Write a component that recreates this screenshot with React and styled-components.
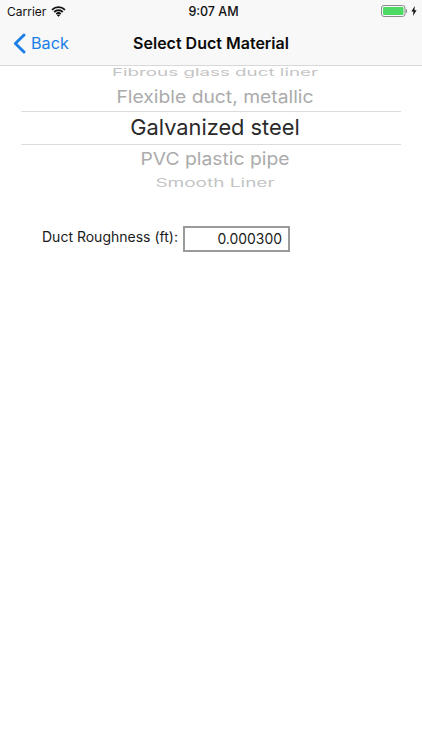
import React from "react";
import styled, { createGlobalStyle } from "styled-components";

const GlobalStyle = createGlobalStyle`
  html, body {
    margin: 0;
    padding: 0;
    background: #fff;
    font-family: "Inter", "Liberation Sans", sans-serif;
  }
`;

const Page = styled.div`
  width: 422px;
  height: 750px;
  overflow: hidden;
  background: #fff;
`;

const Header = styled.header`
  background: #f8f8f8;
  border-bottom: 1px solid #d8d8d8;
  height: 66px;
  box-sizing: border-box;
`;

const StatusBar = styled.div`
  height: 22px;
  padding: 0 5px 0 7px;
  display: grid;
  grid-template-columns: 1fr auto 1fr;
  align-items: center;
  font-size: 12px;
  color: #111;
`;

const StatusLeft = styled.div`
  display: flex;
  align-items: center;
  gap: 5px;
`;

const Clock = styled.div`
  font-weight: 500;
  font-size: 12.5px;
  padding-left: 3px;
`;

const StatusRight = styled.div`
  display: flex;
  justify-content: flex-end;
  align-items: center;
  gap: 4px;
`;

const NavBar = styled.nav`
  height: 42px;
  display: grid;
  grid-template-columns: 1fr auto 1fr;
  align-items: center;
`;

const BackLink = styled.a`
  display: flex;
  align-items: center;
  gap: 5px;
  padding-left: 13px;
  color: #1a7ee6;
  font-size: 16.2px;
`;

const NavTitle = styled.h1`
  margin: 0;
  font-size: 16px;
  font-weight: 600;
  color: #0a0a0a;
`;

const Picker = styled.div`
  margin: 0 21px;
  display: flex;
  flex-direction: column;
  align-items: center;
`;

const PickerRow = styled.div`
  width: 100%;
  height: ${(p) => p.$height}px;
  padding: ${(p) => p.$top || 0}px 0 ${(p) => p.$bottom || 0}px 8px;
  display: flex;
  justify-content: center;
  align-items: center;
  overflow: hidden;
  white-space: nowrap;
  box-sizing: border-box;
  font-size: ${(p) => p.$size}px;
  color: ${(p) => p.$color};
`;

const SelectedRow = styled(PickerRow)`
  border-top: 1px solid #dcdcdc;
  border-bottom: 1px solid #dcdcdc;
`;

const Squashed = styled.span`
  display: inline-block;
  transform: scaleY(${(p) => p.$scale});
`;

const RoughnessRow = styled.div`
  display: flex;
  align-items: flex-start;
  gap: 5px;
  margin-top: 32px;
  padding-left: 42px;
`;

const RoughnessLabel = styled.label`
  font-size: 14px;
  line-height: 22px;
  color: #1a1a1a;
`;

const RoughnessValue = styled.div`
  width: 107px;
  height: 26px;
  box-sizing: border-box;
  border: 2px solid #9a9a9a;
  padding-right: 6px;
  display: flex;
  align-items: center;
  justify-content: flex-end;
  font-size: 13.9px;
  color: #1a1a1a;
`;

const WifiIcon = () => (
  <svg width="15" height="11" viewBox="0 0 15 11" fill="none" stroke="#111" strokeWidth="1.8">
    <path d="M1 3.8a9.4 9.4 0 0 1 13 0" />
    <path d="M3.2 6a6.2 6.2 0 0 1 8.6 0" />
    <path d="M5.3 8.1a3.2 3.2 0 0 1 4.4 0" />
    <path d="M7.5 10.8 5.9 9.2a2.3 2.3 0 0 1 3.2 0z" fill="#111" stroke="none" />
  </svg>
);

const BatteryIcon = () => (
  <svg width="26" height="12" viewBox="0 0 26 12">
    <rect x="0.5" y="0.5" width="23.5" height="11" rx="2.5" fill="none" stroke="#8a8a8a" />
    <rect x="2" y="2" width="20.5" height="8" rx="1.2" fill="#4cd964" />
    <rect x="24.8" y="4.2" width="1.2" height="3.6" rx="0.6" fill="#8a8a8a" />
  </svg>
);

const BoltIcon = () => (
  <svg width="6" height="10" viewBox="0 0 6 10">
    <path d="M3.8 0 0.4 5.6h2.1L1.9 10 5.6 4.2H3.4z" fill="#111" />
  </svg>
);

const ChevronIcon = () => (
  <svg width="13" height="21" viewBox="0 0 13 21" fill="none" stroke="#1a7ee6" strokeWidth="2.9" strokeLinecap="round" strokeLinejoin="round">
    <path d="M11 2 2.4 10.5 11 19" />
  </svg>
);

export default function App() {
  return (
    <Page>
      <GlobalStyle />
      <Header>
        <StatusBar>
          <StatusLeft>
            <span>Carrier</span>
            <WifiIcon />
          </StatusLeft>
          <Clock>9:07 AM</Clock>
          <StatusRight>
            <BatteryIcon />
            <BoltIcon />
          </StatusRight>
        </StatusBar>
        <NavBar>
          <BackLink>
            <ChevronIcon />
            Back
          </BackLink>
          <NavTitle>Select Duct Material</NavTitle>
          <span />
        </NavBar>
      </Header>
      <Picker>
        <PickerRow $height={13} $size={18.8} $color="#c4c4c4">
          <Squashed $scale={0.56}>Fibrous glass duct liner</Squashed>
        </PickerRow>
        <PickerRow $height={32} $top={2} $size={19.3} $color="#ababab">
          <Squashed $scale={0.93}>Flexible duct, metallic</Squashed>
        </PickerRow>
        <SelectedRow $height={34} $bottom={2} $size={21.8} $color="#2a2a2a">
          Galvanized steel
        </SelectedRow>
        <PickerRow $height={27} $bottom={2} $size={19.3} $color="#ababab">
          <Squashed $scale={0.93}>PVC plastic pipe</Squashed>
        </PickerRow>
        <PickerRow $height={22} $size={19} $color="#c4c4c4">
          <Squashed $scale={0.6}>Smooth Liner</Squashed>
        </PickerRow>
      </Picker>
      <RoughnessRow>
        <RoughnessLabel>Duct Roughness (ft):</RoughnessLabel>
        <RoughnessValue>0.000300</RoughnessValue>
      </RoughnessRow>
    </Page>
  );
}
